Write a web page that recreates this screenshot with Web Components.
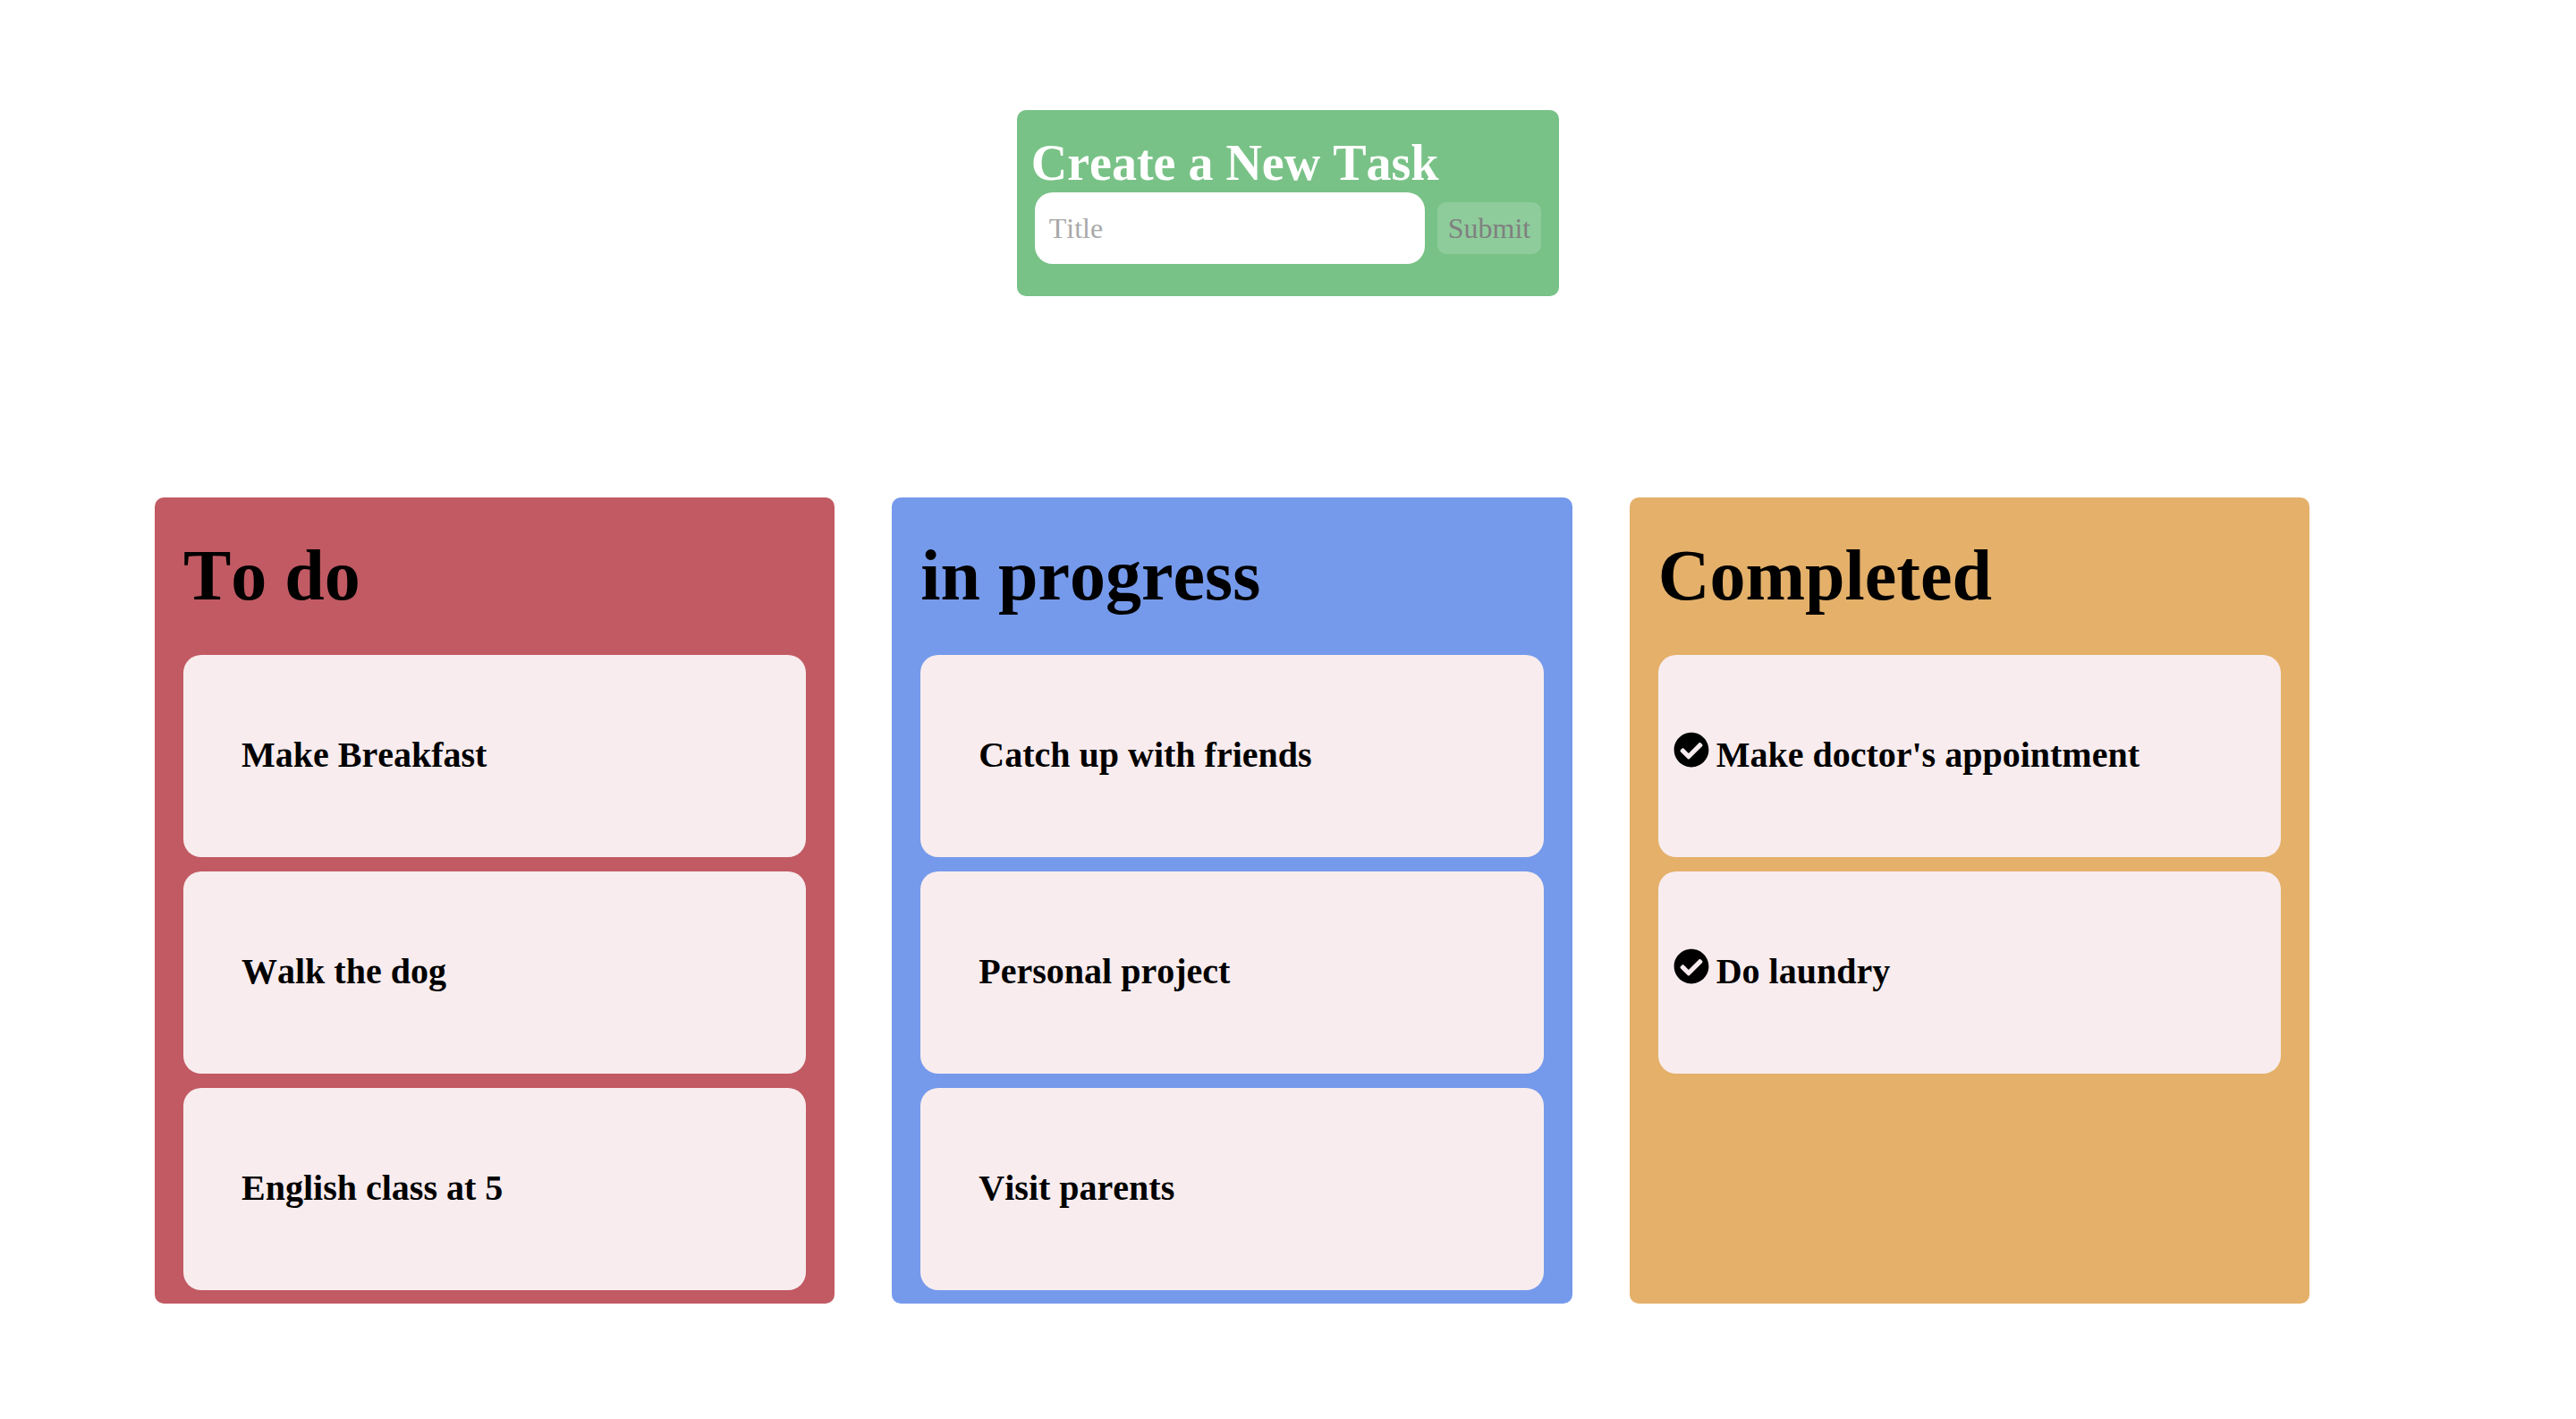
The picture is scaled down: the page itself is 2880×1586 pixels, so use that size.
<!DOCTYPE html>
<html lang="en">
<head>
<meta charset="utf-8">
<title>Task board</title>
<style>
  body { margin: 0; background: #fff; color: #000; font-family: "Liberation Serif", "Times New Roman", serif; font-kerning: none; }
</style>
</head>
<body>
<task-app>
  <task-form slot="form"></task-form>
  <task-column heading="To do" tone="todo">
    <task-card>Make Breakfast</task-card>
    <task-card>Walk the dog</task-card>
    <task-card>English class at 5</task-card>
  </task-column>
  <task-column heading="in progress" tone="progress">
    <task-card>Catch up with friends</task-card>
    <task-card>Personal project</task-card>
    <task-card>Visit parents</task-card>
  </task-column>
  <task-column heading="Completed" tone="completed">
    <task-card done>Make doctor's appointment</task-card>
    <task-card done>Do laundry</task-card>
  </task-column>
</task-app>
<script>
  class BaseElement extends HTMLElement {
    constructor() {
      super();
      this.attachShadow({ mode: "open" }).innerHTML = this.constructor.markup;
    }
  }

  class TaskApp extends BaseElement {
    static markup = `
      <style>
        :host { display: block; padding-top: 123px; }
        header { display: flex; justify-content: center; }
        main { display: grid; grid-template-columns: repeat(3, minmax(0, 1fr)); gap: 64px; padding: 0 298px 0 173px; margin-top: 225px; }
      </style>
      <header><slot name="form"></slot></header>
      <main><slot></slot></main>`;
  }

  class TaskForm extends BaseElement {
    static markup = `
      <style>
        :host { display: block; box-sizing: border-box; padding: 28px 16px 36px; border-radius: 10px; background: #79c287; }
        h2 { margin: 0 0 2px; font-size: 56px; line-height: 62px; color: #fff; }
        form { display: flex; align-items: center; gap: 14px; padding: 0 4px; margin: 0; }
        input, button { font: inherit; font-kerning: inherit; font-size: 32px; border: 0; }
        input { box-sizing: border-box; width: 436px; height: 80px; padding: 0 16px; border-radius: 20px; background: #fff; color: #000; }
        input::placeholder { color: #a9a9a9; opacity: 1; }
        button { padding: 10px 12px; border-radius: 10px; background: #8ecc9b; color: #808080; line-height: 38px; }
      </style>
      <h2>Create a New Task</h2>
      <form>
        <input type="text" placeholder="Title" aria-label="Title">
        <button type="submit" disabled>Submit</button>
      </form>`;
  }

  class TaskColumn extends BaseElement {
    static markup = `
      <style>
        :host { display: block; padding: 40px 32px 15px; border-radius: 10px; }
        :host([tone="todo"]) { background: #c15a63; }
        :host([tone="progress"]) { background: #759aeb; }
        :host([tone="completed"]) { background: #e4b06a; }
        h1 { margin: 0 0 42px; font-size: 80px; line-height: 94px; }
        div { display: flex; flex-direction: column; gap: 16px; }
      </style>
      <h1></h1>
      <div><slot></slot></div>`;
    connectedCallback() {
      this.shadowRoot.querySelector("h1").textContent = this.getAttribute("heading");
    }
  }

  class TaskCard extends BaseElement {
    static markup = `
      <style>
        :host { display: flex; align-items: flex-start; gap: 8px; padding: 86px 17px 88px; border-radius: 20px; background: #f8ecee; }
        svg { flex: none; width: 40px; height: 40px; visibility: hidden; }
        :host([done]) svg { visibility: visible; }
        h3 { margin: 0; font-size: 40px; line-height: 52px; }
      </style>
      <svg viewBox="0 0 512 512" aria-hidden="true"><path d="M504 256c0 136.967-111.033 248-248 248S8 392.967 8 256 119.033 8 256 8s248 111.033 248 248zM227.314 387.314l184-184c6.248-6.248 6.248-16.379 0-22.627l-22.627-22.627c-6.248-6.249-16.379-6.249-22.628 0L216 308.118l-70.059-70.059c-6.248-6.248-16.379-6.248-22.628 0l-22.627 22.627c-6.248 6.248-6.248 16.379 0 22.627l104 104c6.249 6.249 16.379 6.249 22.628.001z"/></svg>
      <h3><slot></slot></h3>`;
  }

  customElements.define("task-app", TaskApp);
  customElements.define("task-form", TaskForm);
  customElements.define("task-column", TaskColumn);
  customElements.define("task-card", TaskCard);
</script>
</body>
</html>
